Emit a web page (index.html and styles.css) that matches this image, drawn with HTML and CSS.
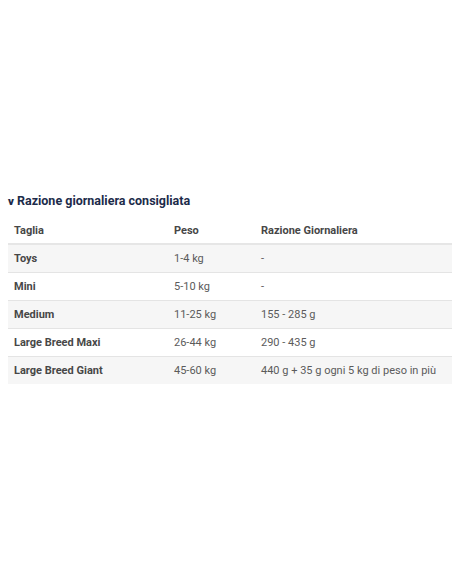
FILE: index.html
```html
<!DOCTYPE html>
<html lang="it">
<head>
<meta charset="utf-8">
<title>Razione giornaliera consigliata</title>
<link rel="stylesheet" href="styles.css">
</head>
<body>
<section class="ration">
  <h3 class="ration-title"><span class="chev">v</span>Razione giornaliera consigliata</h3>
  <table class="ration-table">
    <thead>
      <tr><th class="c1">Taglia</th><th class="c2">Peso</th><th class="c3">Razione Giornaliera</th></tr>
    </thead>
    <tbody>
      <tr><td class="c1">Toys</td><td>1-4 kg</td><td>-</td></tr>
      <tr><td class="c1">Mini</td><td>5-10 kg</td><td>-</td></tr>
      <tr><td class="c1">Medium</td><td>11-25 kg</td><td>155 - 285 g</td></tr>
      <tr><td class="c1">Large Breed Maxi</td><td>26-44 kg</td><td>290 - 435 g</td></tr>
      <tr><td class="c1">Large Breed Giant</td><td>45-60 kg</td><td>440 g + 35 g ogni 5 kg di peso in più</td></tr>
    </tbody>
  </table>
</section>
</body>
</html>
```
FILE: styles.css
```css
html, body { background: #fff; }
body {
  margin: 0;
  padding: 190px 0 0 8px;
  font-family: Roboto, "Liberation Sans", sans-serif;
}
.ration-title {
  margin: 0;
  height: 21px;
  font-size: 12.5px;
  font-weight: 700;
  color: #1c2b4a;
  line-height: 21px;
}
.chev { font-size: 11.5px; font-weight: 900; margin-right: 3px; }
.ration-table {
  width: 444px;
  margin-top: 7px;
  border-collapse: collapse;
  font-size: 11px;
}
.ration-table th {
  text-align: left;
  height: 25px;
  padding: 0 6px;
  font-weight: 700;
  color: #474747;
  border-bottom: 2px solid #e6e6e6;
}
.ration-table td {
  height: 27px;
  padding: 0 6px;
  color: #5b5b5b;
  border-bottom: 1px solid #e4e4e4;
}
.ration-table tbody tr:nth-child(odd) { background: #f6f6f6; }
.ration-table tbody tr:last-child td { border-bottom: 0; height: 27px; }
.ration-table td.c1 { font-weight: 700; color: #474747; }
.c1 { width: 148px; }
.c2 { width: 75px; }
```
